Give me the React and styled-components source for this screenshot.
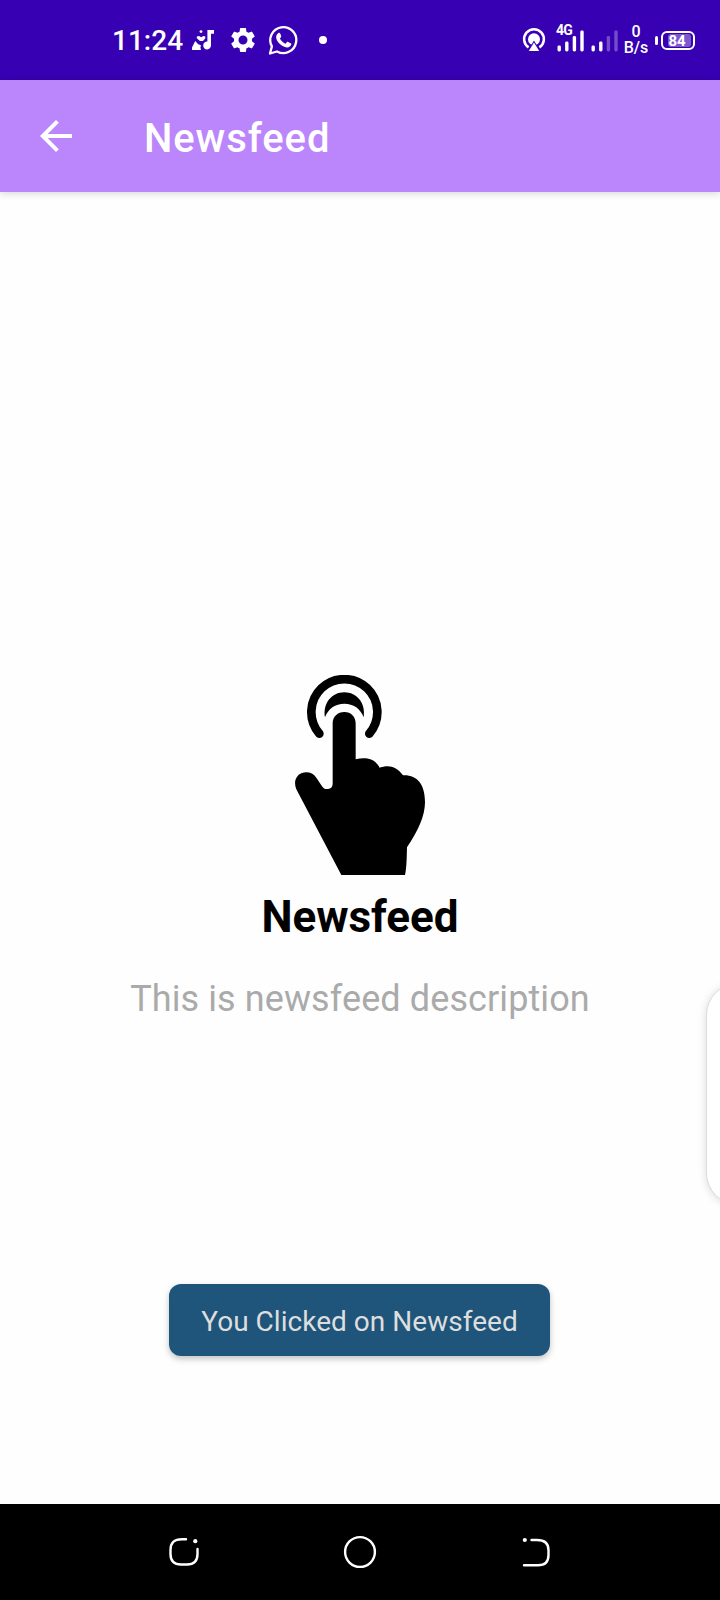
import React from "react";
import styled, { createGlobalStyle } from "styled-components";

const GlobalStyle = createGlobalStyle`
  * { box-sizing: border-box; }
  body { margin: 0; background: #fff; font-family: Roboto, "Liberation Sans", sans-serif; }
  svg { display: block; flex: none; }
`;

const Screen = styled.div`
  position: relative;
  width: 720px;
  height: 1600px;
  display: flex;
  flex-direction: column;
  background: #fefefe;
  overflow: hidden;
`;

const StatusBar = styled.header`
  height: 80px;
  flex: none;
  display: flex;
  align-items: center;
  justify-content: space-between;
  padding: 0 25px 0 112px;
  background: #3700b3;
  color: #fff;
`;

const StatusGroup = styled.div`
  display: flex;
  align-items: center;
  height: 80px;
`;

const Clock = styled.span`
  width: 80px;
  font-size: 28px;
  font-weight: 500;
  line-height: 32px;
  padding-top: 2px;
  white-space: nowrap;
`;

const StatusIcon = styled.svg`
  width: ${(p) => p.$w}px;
  height: ${(p) => p.$h}px;
  margin-left: ${(p) => p.$gap || 0}px;
`;

const Signal = styled.div`
  position: relative;
  display: flex;
  align-items: center;
  margin-left: 9px;
`;

const NetworkType = styled.span`
  position: absolute;
  left: 1px;
  top: -1px;
  font-size: 14px;
  font-weight: 700;
  line-height: 13px;
  letter-spacing: -0.8px;
`;

const Speed = styled.div`
  width: 24px;
  margin-left: 4px;
  display: flex;
  flex-direction: column;
  align-items: center;
  font-size: 16px;
  font-weight: 500;
  line-height: 16px;
`;

const Battery = styled.div`
  display: flex;
  align-items: center;
  margin-left: 7px;
  gap: 3px;
`;

const BatteryNub = styled.div`
  width: 3px;
  height: 9px;
  border-radius: 2px;
  background: #fff;
`;

const BatteryBody = styled.div`
  width: 34px;
  height: 19px;
  padding: 1px;
  border: 2px solid #fff;
  border-radius: 6px;
  display: flex;
  justify-content: flex-end;
`;

const BatteryLevel = styled.div`
  width: 23px;
  height: 13px;
  margin-right: 1px;
  border-radius: 3px;
  background: #7d58cc;
  font-size: 15px;
  font-weight: 700;
  line-height: 14px;
  text-align: center;
  padding-right: 5px;
  display: flex;
  justify-content: center;
`;

const AppBar = styled.div`
  height: 112px;
  flex: none;
  display: flex;
  align-items: center;
  padding-left: 32px;
  background: #bb86fc;
  color: #fff;
  box-shadow: 0 1px 8px rgba(0, 0, 0, 0.18);
`;

const AppTitle = styled.h1`
  margin: 6px 0 0 64px;
  font-size: 40px;
  line-height: 48px;
  font-weight: 500;
  letter-spacing: 0.9px;
`;

const Content = styled.main`
  flex: 1;
  display: flex;
  flex-direction: column;
  align-items: center;
  padding-top: 483px;
`;

const Heading = styled.h2`
  margin: 16px 0 0;
  font-size: 44px;
  line-height: 52px;
  font-weight: 700;
  color: #000;
`;

const Description = styled.p`
  margin: 35px 0 0;
  font-size: 36px;
  line-height: 42px;
  letter-spacing: 0.1px;
  color: #aaa;
  white-space: nowrap;
`;

const Toast = styled.div`
  width: 381px;
  height: 72px;
  margin: 264px 1px 0 0;
  display: flex;
  align-items: center;
  justify-content: center;
  padding-top: 2px;
  border-radius: 12px;
  background: #1f557b;
  color: #dedede;
  font-size: 28px;
  letter-spacing: 0.03px;
  white-space: nowrap;
  box-shadow: 0 3px 6px rgba(0, 0, 0, 0.24);
`;

const EdgePanel = styled.div`
  position: absolute;
  left: 706px;
  top: 983px;
  width: 64px;
  height: 222px;
  border-radius: 34px;
  background: #fff;
  border: 1px solid #dcdcdc;
  box-shadow: 0 1px 8px rgba(0, 0, 0, 0.14);
`;

const NavBar = styled.nav`
  height: 96px;
  flex: none;
  display: grid;
  grid-template-columns: 32px 34px 32px;
  justify-content: space-between;
  align-items: center;
  padding: 0 168px;
  background: #000;
`;

const MusicIcon = () => (
  <StatusIcon $w={24} $h={24} viewBox="0 0 24 24" fill="#fff">
    <path d="M15.4 2H22v3.8h-3V17.5a3.9 3.9 0 1 1-3.6-3.9Z" />
    <circle cx="9" cy="3.6" r="1.4" />
    <path d="M4.8 8.5l2.2-.5 2.2 1.2 2.2-1.2 1.9.5v1.8L11 13H8L4.8 10.3Z" />
    <path d="M0 22v-2.5L3.2 13l3 3.2 2.8 1-.6 2.3.6 2.5Z" />
  </StatusIcon>
);

const GearIcon = () => (
  <StatusIcon $w={30} $h={30} $gap={12} viewBox="0 0 24 24" fill="#fff">
    <path d="M19.14 12.94c.04-.3.06-.61.06-.94 0-.32-.02-.64-.07-.94l2.03-1.58a.49.49 0 0 0 .12-.61l-1.92-3.32a.49.49 0 0 0-.59-.22l-2.39.96c-.5-.38-1.03-.7-1.62-.94l-.36-2.54a.48.48 0 0 0-.48-.41h-3.84a.48.48 0 0 0-.47.41l-.36 2.54c-.59.24-1.13.57-1.62.94l-2.39-.96a.48.48 0 0 0-.59.22L2.74 8.87a.48.48 0 0 0 .12.61l2.03 1.58c-.05.3-.09.63-.09.94s.02.64.07.94l-2.03 1.58a.49.49 0 0 0-.12.61l1.92 3.32c.12.22.37.29.59.22l2.39-.96c.5.38 1.03.7 1.62.94l.36 2.54c.05.24.24.41.48.41h3.84c.24 0 .44-.17.47-.41l.36-2.54c.59-.24 1.13-.56 1.62-.94l2.39.96c.22.08.47 0 .59-.22l1.92-3.32a.48.48 0 0 0-.12-.61ZM12 15.6a3.6 3.6 0 1 1 0-7.2 3.6 3.6 0 0 1 0 7.2Z" />
  </StatusIcon>
);

const WhatsAppIcon = () => (
  <StatusIcon $w={30} $h={31} $gap={10} viewBox="0 0 30 31" fill="none">
    <path d="M2 28.5l1.9-7.1A13 13 0 1 1 9 26.5Z" stroke="#fff" strokeWidth="2.3" strokeLinejoin="round" />
    <path d="M10.2 8.2c.8-.6 1.6-.4 2 .4l1 2.5c.2.6-.1 1-.6 1.6l-.7.8c1.3 2.5 3 4.1 5.6 5.2l1.3-1.5c.4-.5.8-.5 1.3-.3l2.6 1.3c.6.3.7.6.5 1.4-.6 2-2.3 3-4.3 2.8-5.2-.7-9.8-5-10.7-9.4-.3-1.9.6-3.9 2-4.8Z" fill="#fff" />
  </StatusIcon>
);

const DotIcon = () => (
  <StatusIcon $w={8} $h={8} $gap={21} viewBox="0 0 8 8">
    <circle cx="4" cy="4" r="4" fill="#fff" />
  </StatusIcon>
);

const HotspotIcon = () => (
  <StatusIcon $w={24} $h={26} viewBox="0 0 24 26" fill="none">
    <path d="M6.6 20.4A9.9 9.9 0 1 1 17.4 20.4" stroke="#fff" strokeWidth="2.5" />
    <circle cx="12" cy="12.3" r="6" fill="#fff" />
    <path d="M12 15.5L17.2 24H6.8Z" fill="#fff" stroke="#3700b3" strokeWidth="2" paintOrder="stroke" />
  </StatusIcon>
);

const SignalBars = ({ x, active }) =>
  [6, 10, 15.5, 21].map((h, i) => (
    <rect key={h} x={x + i * 7.6} y={26.5 - h} width="3.4" height={h} rx="1.4" fill="#fff" opacity={i < active ? 1 : 0.3} />
  ));

const PointerIcon = () => (
  <svg width="130" height="200" viewBox="45 45 390 600">
    <path d="M118 221A99 99 0 1 1 268 221" fill="none" stroke="#000" strokeWidth="26" strokeLinecap="round" />
    <path d="M135 172C128 130 155 97 193 97S258 130 251 172C242 146 220 131 193 131S144 146 135 172Z" />
    <path d="M184 645L49 388C40 366 48 347 64 340C80 333 99 338 109 353L126 379C131 387 137 388 144 387C153 386 158 380 158 371V190C158 170 173 156 193 156S227 170 227 190V298C255 291 284 294 299 323C326 313 350 319 369 346C410 344 435 371 435 427C435 467 414 514 381 562C380 596 380 624 375 645Z" />
  </svg>
);

export default function App() {
  return (
    <Screen>
      <GlobalStyle />
      <StatusBar>
        <StatusGroup>
          <Clock>11:24</Clock>
          <MusicIcon />
          <GearIcon />
          <WhatsAppIcon />
          <DotIcon />
        </StatusGroup>
        <StatusGroup>
          <HotspotIcon />
          <Signal>
            <StatusIcon $w={65} $h={30} viewBox="0 0 65 30">
              <SignalBars x={2.5} active={4} />
              <SignalBars x={36.5} active={2} />
            </StatusIcon>
            <NetworkType>4G</NetworkType>
          </Signal>
          <Speed>
            <span>0</span>
            <span>B/s</span>
          </Speed>
          <Battery>
            <BatteryNub />
            <BatteryBody>
              <BatteryLevel>84</BatteryLevel>
            </BatteryBody>
          </Battery>
        </StatusGroup>
      </StatusBar>
      <AppBar>
        <svg width="48" height="48" viewBox="0 0 24 24" fill="#fff">
          <path d="M20 11H7.83l5.59-5.59L12 4l-8 8 8 8 1.41-1.41L7.83 13H20v-2Z" />
        </svg>
        <AppTitle>Newsfeed</AppTitle>
      </AppBar>
      <Content>
        <PointerIcon />
        <Heading>Newsfeed</Heading>
        <Description>This is newsfeed description</Description>
        <Toast>You Clicked on Newsfeed</Toast>
      </Content>
      <EdgePanel />
      <NavBar>
        <svg width="32" height="32" viewBox="0 0 32 32" fill="none" stroke="#fff" strokeWidth="2.4" strokeLinecap="round">
          <path d="M18 3.2H14C6 3.2 2.5 7 2.5 14V18C2.5 25 6 28.5 13 28.5H19C26 28.5 29.5 25 29.5 18V13" />
          <circle cx="27.3" cy="5.2" r="2.1" fill="#fff" stroke="none" />
        </svg>
        <svg width="34" height="34" viewBox="0 0 34 34" fill="none" stroke="#fff" strokeWidth="2.4">
          <circle cx="17" cy="17" r="14.9" />
        </svg>
        <svg width="32" height="32" viewBox="0 0 32 32" fill="none" stroke="#fff" strokeWidth="2.4" strokeLinecap="round">
          <path d="M11.5 4H17C25 4 28.5 8 28.5 14V19C28.5 26 24.5 29.3 18 29.3H4" />
          <circle cx="4.8" cy="4" r="2.1" fill="#fff" stroke="none" />
        </svg>
      </NavBar>
    </Screen>
  );
}
